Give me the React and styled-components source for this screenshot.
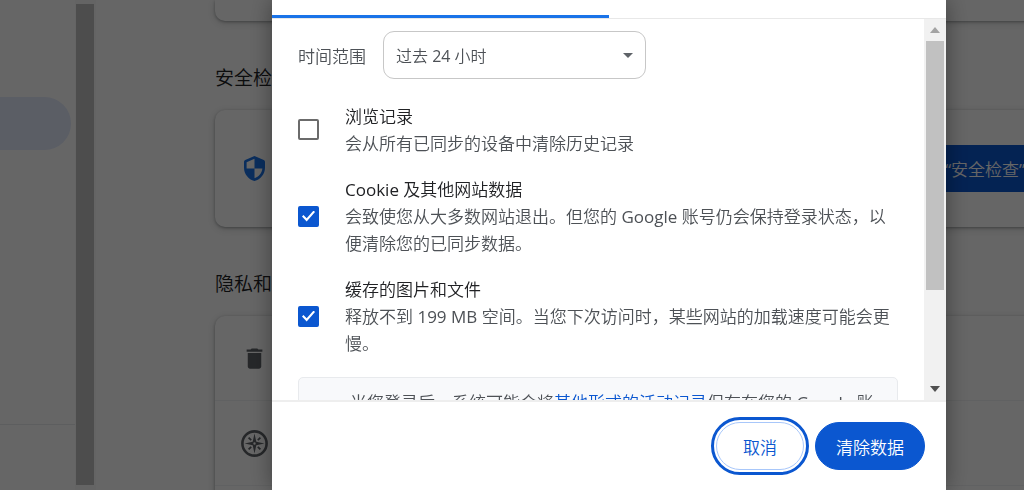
import React, { useState } from 'react';
import styled, { createGlobalStyle } from 'styled-components';
import { MdDelete } from 'react-icons/md';

const GlobalStyle = createGlobalStyle`
  * {
    box-sizing: border-box;
  }
  body {
    margin: 0;
    overflow: hidden;
    background: #fff;
    color: #202124;
    font-family: "Open Sans", "Noto Sans CJK SC DemiLight", "Noto Sans CJK SC", sans-serif;
    font-size: 17px;
  }
  button, select, input {
    margin: 0;
    font: inherit;
  }
`;

const items = [
  {
    id: 'history',
    title: '浏览记录',
    text: '会从所有已同步的设备中清除历史记录',
    checked: false,
  },
  {
    id: 'cookies',
    title: 'Cookie 及其他网站数据',
    text: '会致使您从大多数网站退出。但您的 Google 账号仍会保持登录状态，以便清除您的已同步数据。',
    checked: true,
  },
  {
    id: 'cache',
    title: '缓存的图片和文件',
    text: '释放不到 199 MB 空间。当您下次访问时，某些网站的加载速度可能会更慢。',
    checked: true,
  },
];

function ShieldIcon() {
  return (
    <svg width="21" height="25" viewBox="0 0 21 25" fill="#1a73e8" fillRule="evenodd">
      <path d="M10.5 0 1.2 4.1Q0 4.6 0 5.8v5.6C0 18 4.3 23.2 10.5 25 16.7 23.2 21 18 21 11.4V5.8q0-1.2-1.2-1.7zM10.5 12.5H2.6V6.3l7.9-3.6zM10.5 12.5h7.9c-.5 4.6-3.5 8.2-7.9 9.7z" />
    </svg>
  );
}

function CompassIcon() {
  return (
    <svg width="27" height="27" viewBox="0 0 27 27" fill="#5f6368">
      <circle cx="13.5" cy="13.5" r="12.1" fill="none" stroke="#5f6368" strokeWidth="2.6" />
      <path
        fillRule="evenodd"
        d="M13.5 3.6l1.8 8.1 8.1 1.8-8.1 1.8-1.8 8.1-1.8-8.1-8.1-1.8 8.1-1.8zM13.5 12.3a1.2 1.2 0 1 0 0 2.4 1.2 1.2 0 0 0 0-2.4z"
      />
      <path
        d="M7.6 7.6l2.6 2.6M19.4 7.6l-2.6 2.6M7.6 19.4l2.6-2.6M19.4 19.4l-2.6-2.6"
        stroke="#5f6368"
        strokeWidth="1.8"
      />
    </svg>
  );
}

function ScrollArrow({ up, color }) {
  return (
    <svg width="10" height="6" viewBox="0 0 10 6" fill={color}>
      <path d={up ? 'M0 6 5 0l5 6z' : 'M0 0h10L5 6z'} />
    </svg>
  );
}

function SettingsPage() {
  return (
    <Page>
      <Sidebar>
        <ActiveItem />
        <SidebarLine />
      </Sidebar>
      <PageScroll>
        <PageThumb />
      </PageScroll>
      <Main>
        <CardEnd />
        <Heading>安全检查</Heading>
        <Card>
          <SafetyRow>
            <IconBox><ShieldIcon /></IconBox>
            <SafetyButton type="button">前往“安全检查”</SafetyButton>
          </SafetyRow>
        </Card>
        <Heading>隐私和安全</Heading>
        <Card>
          <Row>
            <IconBox><MdDelete size={27} color="#5f6368" /></IconBox>
          </Row>
          <Row>
            <IconBox><CompassIcon /></IconBox>
          </Row>
          <Row />
        </Card>
      </Main>
    </Page>
  );
}

function ClearDataDialog() {
  const [checked, setChecked] = useState(
    Object.fromEntries(items.map((item) => [item.id, item.checked]))
  );

  const toggle = (id) => setChecked({ ...checked, [id]: !checked[id] });

  return (
    <Backdrop>
      <Dialog role="dialog" aria-modal="true" aria-label="清除浏览数据">
        <Tabs>
          <Tab $active />
          <Tab />
        </Tabs>
        <Body>
          <Content>
            <RangeRow>
              <label htmlFor="range">时间范围</label>
              <SelectWrap>
                <Select id="range" defaultValue="day">
                  <option value="hour">过去一小时</option>
                  <option value="day">过去 24 小时</option>
                  <option value="week">过去 7 天</option>
                  <option value="all">时间不限</option>
                </Select>
                <svg width="10" height="5" viewBox="0 0 10 5" fill="#5f6368">
                  <path d="M0 0h10L5 5z" />
                </svg>
              </SelectWrap>
            </RangeRow>
            <Options>
              {items.map((item) => (
                <Option key={item.id}>
                  <Checkbox
                    id={item.id}
                    type="checkbox"
                    checked={checked[item.id]}
                    onChange={() => toggle(item.id)}
                  />
                  <OptionLabel htmlFor={item.id}>
                    <OptionTitle>{item.title}</OptionTitle>
                    <OptionText>{item.text}</OptionText>
                  </OptionLabel>
                </Option>
              ))}
            </Options>
            <Notice>
              当您登录后，系统可能会将<a href="#activity">其他形式的活动记录</a>保存在您的 Google 账号中。您可以随时删除这些活动记录。
            </Notice>
          </Content>
          <DialogScroll>
            <ScrollArrow up color="#a3a3a3" />
            <DialogTrack>
              <DialogThumb />
            </DialogTrack>
            <ScrollArrow color="#505050" />
          </DialogScroll>
        </Body>
        <Footer>
          <Button type="button" $focused>取消</Button>
          <Button type="button" $primary>清除数据</Button>
        </Footer>
      </Dialog>
    </Backdrop>
  );
}

export default function App() {
  return (
    <>
      <GlobalStyle />
      <SettingsPage />
      <ClearDataDialog />
    </>
  );
}

/* settings page */

const Page = styled.div`
  display: flex;
  height: 100vh;
  overflow: hidden;
`;

const Sidebar = styled.nav`
  flex: 0 0 75px;
  padding-top: 97px;
`;

const ActiveItem = styled.div`
  height: 53px;
  margin-right: 4px;
  border-radius: 0 27px 27px 0;
  background: #e3ebfd;
`;

const SidebarLine = styled.div`
  height: 1px;
  margin-top: 274px;
  background: #e8eaed;
`;

const PageScroll = styled.div`
  flex: 0 0 21px;
  padding: 4px 2px 5px 1px;
  background: #f9f9f9;
`;

const PageThumb = styled.div`
  height: 100%;
  background: #c1c1c1;
`;

const Main = styled.main`
  flex: 1;
  min-width: 0;
  padding-left: 119px;
  overflow: hidden;
`;

const Card = styled.section`
  margin-right: -54px;
  border-radius: 10px;
  background: #fff;
  box-shadow: 0 1px 3px rgba(60, 64, 67, 0.4), 0 2px 8px rgba(60, 64, 67, 0.2);
`;

const CardEnd = styled(Card)`
  height: 21px;
  border-radius: 0 0 10px 10px;
`;

const Heading = styled.h2`
  margin: 0;
  padding: 44px 0 18px;
  font-size: 19px;
  font-weight: 400;
  line-height: 27px;
`;

const Row = styled.div`
  display: flex;
  align-items: center;
  min-height: 85px;
  padding: 0 26px;
  border-bottom: 1px solid #f1f3f4;
`;

const SafetyRow = styled(Row)`
  min-height: 117px;
  border-bottom: 0;
`;

const IconBox = styled.span`
  display: flex;
  justify-content: center;
  width: 27px;
`;

const SafetyButton = styled.button`
  height: 47px;
  margin-left: auto;
  padding: 0 27px;
  border: 0;
  border-radius: 5px;
  background: #0b57d0;
  color: #fff;
  white-space: nowrap;
`;

/* dialog */

const Backdrop = styled.div`
  position: fixed;
  inset: 0;
  display: flex;
  padding: 0 78px 0 272px;
  background: rgba(0, 0, 0, 0.6);
`;

const Dialog = styled.div`
  display: flex;
  flex: 1;
  flex-direction: column;
  min-width: 0;
  background: #fff;
  box-shadow: 0 0 22px rgba(0, 0, 0, 0.4);
`;

const Tabs = styled.div`
  display: flex;
  flex: none;
  height: 19px;
  border-bottom: 1px solid #e8e8e8;
`;

const Tab = styled.div`
  flex: 1;
  border-bottom: 3px solid ${(p) => (p.$active ? '#1a73e8' : 'transparent')};
`;

const Body = styled.div`
  display: flex;
  flex: 1;
  min-height: 0;
`;

const Content = styled.div`
  flex: 1;
  min-width: 0;
  padding: 12px 26px 0;
  overflow: hidden;
  color: #4d5156;
`;

const RangeRow = styled.div`
  display: flex;
  align-items: center;
  gap: 17px;
`;

const SelectWrap = styled.div`
  position: relative;

  svg {
    position: absolute;
    top: 22px;
    right: 13px;
    pointer-events: none;
  }
`;

const Select = styled.select`
  appearance: none;
  width: 263px;
  height: 48px;
  padding: 2px 32px 0 12px;
  border: 1px solid #c7c7c7;
  border-radius: 11px;
  background: #fff;
  color: #4d5156;
  font-size: 16px;
`;

const Options = styled.div`
  display: grid;
  gap: 20px;
  padding: 25px 0 20px;
`;

const Option = styled.div`
  display: flex;
  align-items: center;
  gap: 26px;
`;

const Checkbox = styled.input`
  appearance: none;
  display: grid;
  flex: none;
  place-items: center;
  width: 21px;
  height: 21px;
  margin-bottom: 2px;
  border: 2px solid #6b6b6b;
  border-radius: 2px;

  &:checked {
    border-color: #0b57d0;
    background: #0b57d0;
  }

  &:checked::after {
    content: '';
    width: 13px;
    height: 11px;
    background: #fff;
    clip-path: polygon(0 54%, 11% 40%, 36% 70%, 89% 0, 100% 14%, 36% 100%);
  }
`;

const OptionLabel = styled.label`
  flex: 1;
`;

const OptionTitle = styled.span`
  display: block;
  color: #202124;
  line-height: 26px;
`;

const OptionText = styled.span`
  display: block;
  line-height: 27px;
`;

const Notice = styled.div`
  padding: 11px 15px 11px 51px;
  border: 1px solid #e8eaed;
  border-radius: 5px;
  background: #f8f9fb;
  line-height: 27px;

  a {
    color: #0b57d0;
    text-decoration: none;
  }
`;

const DialogScroll = styled.div`
  display: flex;
  flex: 0 0 22px;
  flex-direction: column;
  align-items: center;
  padding: 8px 2px;
  background: #f1f1f1;
`;

const DialogTrack = styled.div`
  flex: 1;
  width: 18px;
  padding: 8px 0;
`;

const DialogThumb = styled.div`
  height: 74%;
  background: #c1c1c1;
`;

const Footer = styled.div`
  display: flex;
  flex: none;
  justify-content: flex-end;
  gap: 11px;
  padding: 20px 21px;
  border-top: 2px solid #eee;
`;

const Button = styled.button`
  height: 48px;
  padding: 0 ${(p) => (p.$primary ? 20 : 26)}px;
  border: 1px solid ${(p) => (p.$primary ? '#0b57d0' : '#a8c7fa')};
  border-radius: 24px;
  outline: ${(p) => (p.$focused ? '3px solid #0b57d0' : 'none')};
  outline-offset: 2px;
  background: ${(p) => (p.$primary ? '#0b57d0' : '#fff')};
  color: ${(p) => (p.$primary ? '#fff' : '#0b57d0')};
`;
